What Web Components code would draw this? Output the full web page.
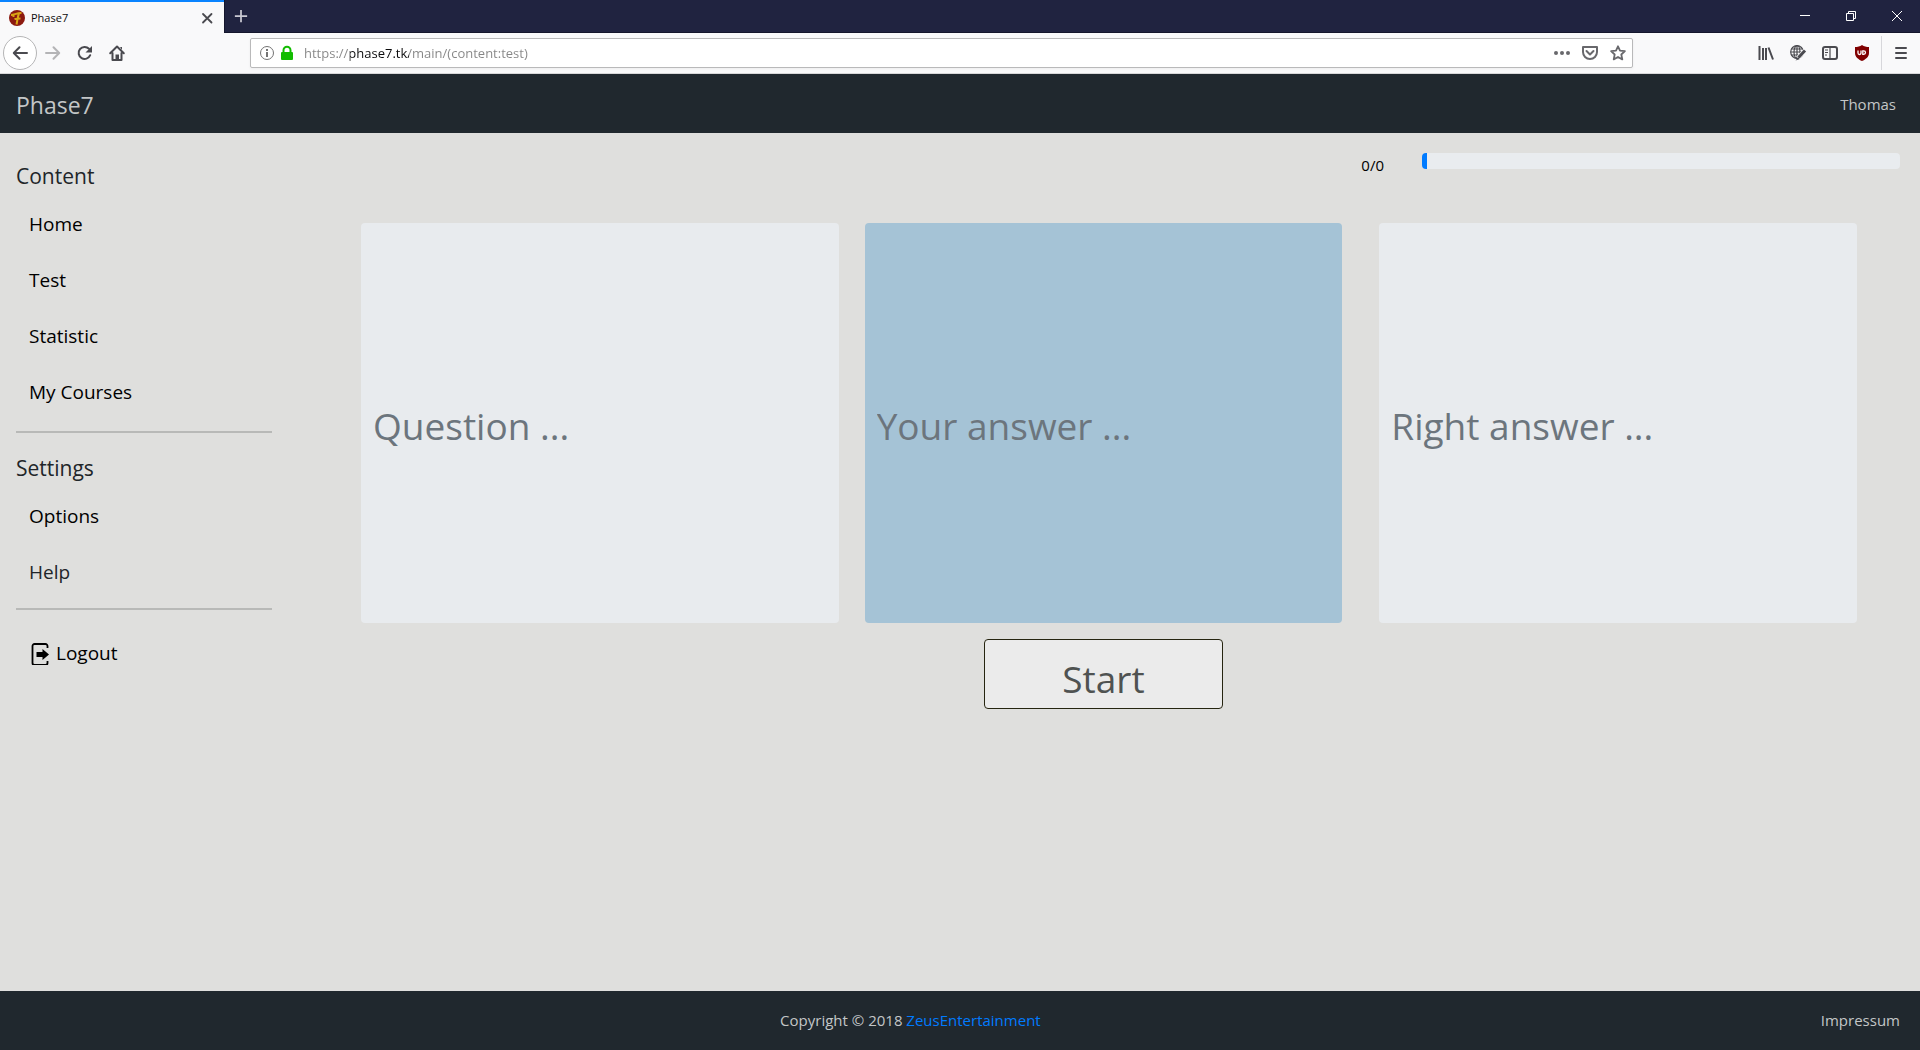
<!DOCTYPE html>
<html lang="en">
<head>
<meta charset="utf-8">
<title>Phase7</title>
<style>
html, body { margin: 0; }
body { font-family: "Open Sans", "Noto Sans", sans-serif; font-size: 15px; line-height: 24px; color: #212529; background: #dfdfdd; }
</style>
</head>
<body>
<app-window></app-window>
<script>
const define = (name, html, init) => customElements.define(name, class extends HTMLElement {
  constructor() {
    super();
    this.attachShadow({ mode: 'open' }).innerHTML = html;
  }
  connectedCallback() { if (init) init(this, this.shadowRoot); }
});

const ICONS = {
  back: '<path d="M15 8H2M7.5 2.2 1.8 8l5.7 5.8" fill="none" stroke="currentColor" stroke-width="2" stroke-linecap="round" stroke-linejoin="round"/>',
  forward: '<path d="M1 8h13M8.500 2.200 14.200 8l-5.700 5.800" fill="none" stroke="currentColor" stroke-width="2" stroke-linecap="round" stroke-linejoin="round"/>',
  reload: '<path d="M13.200 10.200A6 6 0 1 1 12 3.800" fill="none" stroke="currentColor" stroke-width="2" stroke-linecap="round"/><path d="M15 1v6.500H8.500z" fill="currentColor"/>',
  home: '<path d="M1.200 8.300 8 1.500l6.800 6.800M3.500 8v6.900h9V8" fill="none" stroke="currentColor" stroke-width="2" stroke-linecap="round" stroke-linejoin="round"/><path d="M6.500 15V9.500h3.500V15z" fill="currentColor"/><path d="M11 2h2v3z" fill="currentColor"/>',
  info: '<circle cx="8" cy="8" r="6.500" fill="none" stroke="currentColor"/><path d="M7 7h2v5H7zM7 4h2v2H7z" fill="currentColor"/>',
  lock: '<path d="M4.500 8V5.200a3.500 3.500 0 0 1 7 0V8" fill="none" stroke="currentColor" stroke-width="2"/><rect x="2" y="7" width="12" height="8" rx="1" fill="currentColor"/>',
  dots: '<g fill="currentColor"><circle cx="2" cy="8" r="2"/><circle cx="8" cy="8" r="2"/><circle cx="14" cy="8" r="2"/></g>',
  pocket: '<path d="M1 2h14v5a7 7 0 0 1-14 0z" fill="none" stroke="currentColor" stroke-width="2" stroke-linejoin="round"/><path d="M4.500 6 8 9.500 11.500 6" fill="none" stroke="currentColor" stroke-width="2" stroke-linecap="round" stroke-linejoin="round"/>',
  star: '<path d="m8 1.300 2 4.400 4.900.500-3.600 3.300 1 4.900L8 12l-4.300 2.400 1-4.900L1.100 6.200 6 5.700z" fill="none" stroke="currentColor" stroke-width="1.800" stroke-linejoin="round"/>',
  library: '<path d="M1.500 1v14M5 3v12M8 3v12M10.500 2.500l4.500 12" fill="none" stroke="currentColor" stroke-width="2"/>',
  globe: '<g fill="none" stroke="currentColor" stroke-width="1.200"><circle cx="7" cy="7" r="6.300"/><ellipse cx="7" cy="7" rx="3" ry="6.300"/><path d="M7 .7v12.600M.7 7h12.600M1.700 4h10.600M1.700 10h10.600"/></g><path d="m15 5.500-7 7.500" stroke="#f9f9fa" stroke-width="4.500"/><path d="m15 5.500-6.500 7" stroke="currentColor" stroke-width="3"/><path d="m8.500 12-3 3.500 4-1.200z" fill="currentColor"/>',
  sidebar: '<rect x="1" y="2" width="14" height="12" rx="2" fill="none" stroke="currentColor" stroke-width="2"/><path d="M8 2v12" stroke="currentColor" stroke-width="1.200"/><path d="M3 5h3M3 7.500h3M3 10h2" stroke="currentColor"/>',
  shield: '<path d="M8 0c2 1.500 4.500 2 7 2v6c0 4-3.500 6.500-7 8-3.500-1.500-7-4-7-8V2c2.500 0 5-.500 7-2z" fill="#800000"/><path d="M4 5.500V8a1.500 1.500 0 0 0 3 0V5.500M8.800 5.800v3.600h.900a1.800 1.800 0 0 0 0-3.600z" fill="none" stroke="#fff" stroke-width="1.300"/>',
  menu: '<path d="M3 3h10M3 8h10M3 13h10" stroke="currentColor" stroke-width="2" stroke-linecap="round"/>',
  cross: '<path d="m4 4 8.500 8.500m0-8.500L4 12.500" stroke="currentColor" stroke-width="1.800" stroke-linecap="round"/>',
  plus: '<path d="M8 1v14M1 8h14" stroke="currentColor" stroke-width="2"/>',
  minimize: '<path d="M3 7.500h10" stroke="currentColor"/>',
  restore: '<path d="M3.500 5.500h7v7h-7zM5.500 5V3.500h7v7H11" fill="none" stroke="currentColor"/>',
  close: '<path d="m3 3 10 10m0-10L3 13" stroke="currentColor"/>',
  favicon: '<circle cx="8" cy="8" r="8" fill="#8c1a10"/><path d="M2 5C5 5 8 2.800 12.500 3M10 3.500C8.500 7 8.500 10 7.500 14.500M5.500 9c2-.500 4-.500 6-.500M4.500 5v2" fill="none" stroke="#d9a514" stroke-width="2"/>'
};

/* Square glyph picked by name */
define('ui-icon', `<style>
  :host { display: block; width: 16px; height: 16px; flex: none; }
  svg { display: block; width: 100%; height: 100%; overflow: visible; }
</style><svg viewBox="0 0 16 16" aria-hidden="true"></svg>`,
(el, root) => { root.querySelector('svg').innerHTML = ICONS[el.getAttribute('name')]; });

/* Button that holds one icon */
define('icon-button', `<style>
  :host { display: flex; flex: none; width: 32px; height: 32px; color: #4a4a4f; }
  button { flex: 1; display: flex; align-items: center; justify-content: center; padding: 0; border: 0; background: none; color: inherit; }
  :host([round]) { width: 34px; height: 34px; }
  :host([round]) button { box-sizing: border-box; border: 1px solid #b5b5b6; border-radius: 50%; background: #fff; }
  :host([dim]) { color: #b4b4b6; }
</style><button type="button"><slot></slot></button>`,
(el, root) => root.querySelector('button').setAttribute('aria-label', el.getAttribute('label')));

define('tab-strip', `<style>
  :host { display: flex; height: 33px; box-sizing: border-box; background: #202340; color: #fff; }
  .tab { display: flex; align-items: center; box-sizing: border-box; width: 224px; padding: 0 9px; border-top: 2px solid #0a84ff; background: #f9f9fa; color: #0c0c0d; font-size: 11px; gap: 6px; }
  .tab span { flex: 1; }
  .tab icon-button { width: 16px; height: 16px; }
  .rest { flex: 1; display: flex; border-bottom: 1px solid #14162c; border-left: 1px solid #14162c; }
  .rest icon-button { color: #fff; width: 46px; }
  .rest .new { width: 32px; color: #c9c9d2; margin-right: auto; }
  .new ui-icon { width: 14px; height: 14px; }
</style>
<div class="tab"><ui-icon name="favicon"></ui-icon><span>Phase7</span><icon-button label="Close tab"><ui-icon name="cross"></ui-icon></icon-button></div>
<div class="rest">
  <icon-button class="new" label="New tab"><ui-icon name="plus"></ui-icon></icon-button>
  <icon-button label="Minimize"><ui-icon name="minimize"></ui-icon></icon-button>
  <icon-button label="Restore"><ui-icon name="restore"></ui-icon></icon-button>
  <icon-button label="Close"><ui-icon name="close"></ui-icon></icon-button>
</div>`);

define('url-bar', `<style>
  :host { display: flex; align-items: center; box-sizing: border-box; height: 30px; padding: 0 0 0 8px; border: 1px solid #b9b9ba; border-radius: 2px; background: #fff; box-shadow: 0 1px 3px #0000000d; }
  .info { color: #737373; margin-right: 4px; }
  .lock { color: #12bc00; margin-right: 9px; }
  input { flex: 1; min-width: 0; height: 28px; box-sizing: border-box; padding: 0; border: 0; outline: 0; font: 13px "Open Sans", "Noto Sans", sans-serif;
    color: transparent; background: linear-gradient(90deg, #858585 46px, #0c0c0d 46px, #0c0c0d 105px, #858585 105px); background-clip: text; -webkit-background-clip: text; }
  icon-button { width: 28px; height: 28px; color: #68686c; }
</style>
<ui-icon class="info" name="info"></ui-icon><ui-icon class="lock" name="lock"></ui-icon>
<input type="text" aria-label="Address" value="https://phase7.tk/main/(content:test)">
<icon-button label="Page actions"><ui-icon name="dots"></ui-icon></icon-button>
<icon-button label="Save to Pocket"><ui-icon name="pocket"></ui-icon></icon-button>
<icon-button label="Bookmark"><ui-icon name="star"></ui-icon></icon-button>`);

define('browser-toolbar', `<style>
  :host { display: flex; align-items: center; box-sizing: border-box; height: 41px; padding: 0 3px; background: #f9f9fa; border-bottom: 1px solid #d8d8d9; }
  .space { flex: 117 1 0; }
  url-bar { flex: 1373 1 0; }
  .rule { width: 1px; height: 34px; margin: 0 3px; background: #d7d7db; }
</style>
<icon-button round label="Back"><ui-icon name="back"></ui-icon></icon-button>
<icon-button dim label="Forward"><ui-icon name="forward"></ui-icon></icon-button>
<icon-button label="Reload"><ui-icon name="reload"></ui-icon></icon-button>
<icon-button label="Home"><ui-icon name="home"></ui-icon></icon-button>
<div class="space"></div>
<url-bar></url-bar>
<div class="space"></div>
<icon-button label="Library"><ui-icon name="library"></ui-icon></icon-button>
<icon-button label="Translate"><ui-icon name="globe"></ui-icon></icon-button>
<icon-button label="Sidebars"><ui-icon name="sidebar"></ui-icon></icon-button>
<icon-button label="Content blocker"><ui-icon name="shield"></ui-icon></icon-button>
<div class="rule"></div>
<icon-button label="Menu"><ui-icon name="menu"></ui-icon></icon-button>`);

define('site-header', `<style>
  :host { display: flex; align-items: center; justify-content: space-between; height: 59px; padding: 0 24px 0 16px; background: #20282e; }
  a { color: #c3c6c7; text-decoration: none; }
  .brand { font-size: 23px; line-height: 36px; padding-top: 2px; }
</style>
<a class="brand" href="#">Phase7</a><a href="#user">Thomas</a>`);

define('nav-section', `<style>
  :host { display: block; padding: 21px 0 11px; border-bottom: 2px solid #b8b9b7; }
  :host([tight]) { padding-bottom: 8px; }
  h2 { margin: 0 0 6px; font-size: 21px; font-weight: 400; line-height: 28px; }
</style><h2></h2><slot></slot>`,
(el, root) => { root.querySelector('h2').textContent = el.getAttribute('heading'); });

define('nav-link', `<style>
  :host { display: block; color: #000; }
  :host([muted]) { color: #212529; }
  a { display: flex; align-items: center; gap: 5px; padding: 16px 13px; font-size: 19px; line-height: 24px; color: inherit; text-decoration: none; }
</style><a><slot name="icon"></slot><slot></slot></a>`,
(el, root) => root.querySelector('a').setAttribute('href', el.getAttribute('to')));

define('side-nav', `<style>
  :host { display: block; box-sizing: border-box; padding: 8px 16px; }
  .logout { margin-top: 15px; }
  svg { display: block; width: 22px; height: 24px; }
</style>
<nav>
  <nav-section heading="Content">
    <nav-link to="#home">Home</nav-link>
    <nav-link to="#test">Test</nav-link>
    <nav-link to="#statistic">Statistic</nav-link>
    <nav-link to="#courses">My Courses</nav-link>
  </nav-section>
  <nav-section heading="Settings" tight>
    <nav-link to="#options">Options</nav-link>
    <nav-link to="#help" muted>Help</nav-link>
  </nav-section>
  <nav-link class="logout" to="#logout"><svg slot="icon" viewBox="0 0 22 24" aria-hidden="true">
    <path d="M18.500 7V5a2 2 0 0 0-2-2h-11a2 2 0 0 0-2 2v17a2 2 0 0 0 2 2h11a2 2 0 0 0 2-2v-2" fill="none" stroke="#000" stroke-width="1.800"/>
    <path d="M7.500 11h6V8l6.500 5.500-6.500 5.500v-3h-6z" fill="#000"/></svg>Logout</nav-link>
</nav>`);

define('test-progress', `<style>
  :host { display: flex; align-items: flex-start; justify-content: flex-end; gap: 38px; color: #000; }
  progress { appearance: none; -webkit-appearance: none; display: block; flex: 0 1 478px; height: 16px; border: 0; border-radius: 4px; overflow: hidden; background: #e9ecef; }
  progress::-webkit-progress-bar { background: #e9ecef; }
  progress::-webkit-progress-value { background: #007bff; }
</style>
<label for="done">0/0</label><progress id="done" value="1" max="100"></progress>`);

define('answer-card', `<style>
  :host { display: block; }
  input { display: block; box-sizing: border-box; width: 100%; height: 400px; padding: 4px 12px 0; border: 0; border-radius: 4px; background: #e8ebee; color: #495057; font: 37px "Open Sans", "Noto Sans", sans-serif; }
  input::placeholder { color: #6c757d; opacity: 1; }
  :host([active]) input { background: #a5c3d6; }
</style><input type="text">`,
(el, root) => {
  const field = root.querySelector('input');
  field.placeholder = el.getAttribute('prompt');
  field.setAttribute('aria-label', el.getAttribute('prompt'));
  field.readOnly = !el.hasAttribute('active');
});

define('test-page', `<style>
  :host { display: block; box-sizing: border-box; padding: 20px; }
  .board { display: grid; grid-template-columns: 1fr 26px 1fr 37px 1fr; row-gap: 16px; margin: 46px 43px 0 53px; }
  .q { grid-column: 1; } .a { grid-column: 3; } .r { grid-column: 5; }
  button { grid-column: 3; justify-self: center; width: 50%; height: 70px; padding: 8px 0 0; border: 1px solid #262510; border-radius: 4px; background: #ebebeb; color: #4f5251; font: 37px "Open Sans", "Noto Sans", sans-serif; }
</style>
<test-progress></test-progress>
<div class="board">
  <answer-card class="q" prompt="Question ..."></answer-card>
  <answer-card class="a" active prompt="Your answer ..."></answer-card>
  <answer-card class="r" prompt="Right answer ..."></answer-card>
  <button type="button">Start</button>
</div>`);

define('site-footer', `<style>
  :host { display: grid; grid-template-columns: 1fr auto; align-items: center; height: 57px; padding: 0 20px 2px; background: #20282e; color: #c3c6c7; }
  p { margin: 0; padding-right: 20px; text-align: center; }
  a { color: #c3c6c7; text-decoration: none; }
  p a { color: #007bff; }
</style>
<p>Copyright © 2018 <a href="#zeus">ZeusEntertainment</a></p><a href="#impressum">Impressum</a>`);

define('app-window', `<style>
  :host { display: flex; flex-direction: column; min-height: 100vh; }
  .body { flex: 1; display: grid; grid-template-columns: 15% 1fr; }
</style>
<tab-strip></tab-strip>
<browser-toolbar></browser-toolbar>
<site-header></site-header>
<div class="body"><side-nav></side-nav><main><test-page></test-page></main></div>
<site-footer></site-footer>`);
</script>
</body>
</html>
